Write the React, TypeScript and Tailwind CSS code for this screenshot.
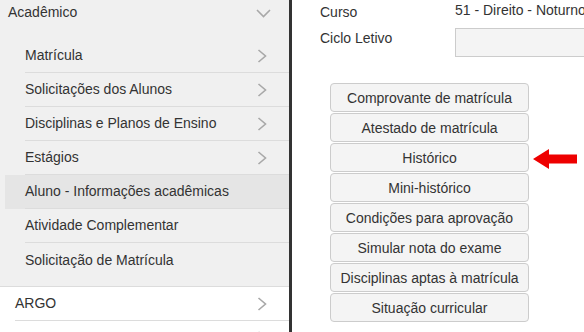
import React from "react";

const subItems = [
  { name: "Matrícula", arrow: true },
  { name: "Solicitações dos Alunos", arrow: true },
  { name: "Disciplinas e Planos de Ensino", arrow: true },
  { name: "Estágios", arrow: true },
  { name: "Aluno - Informações acadêmicas", active: true },
  { name: "Atividade Complementar" },
  { name: "Solicitação de Matrícula", last: true },
];

const buttons = [
  "Comprovante de matrícula",
  "Atestado de matrícula",
  "Histórico",
  "Mini-histórico",
  "Condições para aprovação",
  "Simular nota do exame",
  "Disciplinas aptas à matrícula",
  "Situação curricular",
];

function ChevronRight() {
  return (
    <svg width="10" height="14" viewBox="0 0 10 14" fill="none">
      <polyline points="1.5,1 8.5,7 1.5,13" stroke="#a8a8a8" strokeWidth="1.6" />
    </svg>
  );
}

function ChevronDown() {
  return (
    <svg width="15" height="9" viewBox="0 0 15 9" fill="none">
      <polyline points="1,1 7.5,7.5 14,1" stroke="#a8a8a8" strokeWidth="1.6" />
    </svg>
  );
}

function RedArrow() {
  return (
    <svg width="44" height="20" viewBox="0 0 44 20">
      <polygon points="0,10 16,0 16,5.5 44,5.5 44,14.5 16,14.5 16,20" fill="#ee0000" />
    </svg>
  );
}

export default function App() {
  return (
    <div
      className="flex w-[584px] h-[332px] overflow-hidden bg-white text-[14px] text-[#333]"
      style={{ fontFamily: '"Liberation Sans", Arial, sans-serif' }}
    >
      {/* Sidebar */}
      <aside className="w-[289px] shrink-0 bg-[#f0f0f0] flex flex-col overflow-hidden">
        {/* Acadêmico header */}
        <div className="h-[24px] shrink-0 flex items-center justify-between pl-[8px] pr-[18px]">
          <span>Acadêmico</span>
          <span className="mt-[3px]">
            <ChevronDown />
          </span>
        </div>

        {/* Submenu */}
        <div className="shrink-0 pt-[15px] pb-[9px] border-b border-[#dcdcdc]">
          {subItems.map((item) => (
            <div
              key={item.name}
              className={`ml-[5px] pl-[20px] ${item.active ? "bg-[#e5e5e5]" : ""}`}
            >
              <div
                className={`h-[34px] flex items-center justify-between pr-[22px] ${
                  item.last ? "" : "border-b border-[#dcdcdc]"
                }`}
              >
                <span>{item.name}</span>
                {item.arrow && <ChevronRight />}
              </div>
            </div>
          ))}
        </div>

        {/* Top-level items */}
        <div className="shrink-0 bg-white flex-1">
          <div className="pl-[15px]">
            <div className="h-[34px] flex items-center justify-between pr-[22px] border-b border-[#dcdcdc]">
              <span>ARGO</span>
              <ChevronRight />
            </div>
            <div className="h-[34px] flex items-center justify-between pr-[22px]">
              <span></span>
              <ChevronRight />
            </div>
          </div>
        </div>
      </aside>

      {/* Divider */}
      <div className="w-[3px] shrink-0 bg-[#333]" />

      {/* Main */}
      <main className="flex-1 pl-[28px]">
        <div className="flex h-[28px]">
          <span className="w-[135px] leading-[20px] mt-[2px]">Curso</span>
          <span className="leading-[20px] whitespace-nowrap">51 - Direito - Noturno</span>
        </div>
        <div className="flex">
          <span className="w-[135px] leading-[20px]">Ciclo Letivo</span>
          <div className="h-[29px] w-[200px] bg-[#f4f4f4] border border-[#cccccc]" />
        </div>

        <div className="mt-[26px] ml-[10px] flex flex-col gap-px">
          {buttons.map((label) => (
            <div key={label} className="flex items-center">
              <button className="w-[199px] h-[29px] bg-[#f4f4f4] border border-[#cccccc] rounded-[4px] text-[14px] text-[#333] leading-none">
                {label}
              </button>
              {label === "Histórico" && (
                <div className="ml-[4px] mt-[2px]">
                  <RedArrow />
                </div>
              )}
            </div>
          ))}
        </div>
      </main>
    </div>
  );
}
